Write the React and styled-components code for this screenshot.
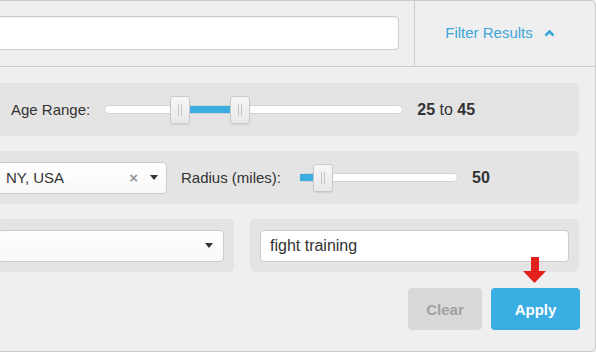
import React from "react";
import styled, { createGlobalStyle } from "styled-components";

const GlobalStyle = createGlobalStyle`
  body {
    margin: 0;
    background: #efefef;
    overflow: hidden;
    font-family: "Liberation Sans", Arial, sans-serif;
    color: #333;
  }
`;

const Panel = styled.div`
  box-sizing: border-box;
  width: 626px;
  height: 352px;
  margin-left: -30px;
  background: #efefef;
  border: 1px solid #ccc;
  border-radius: 0 6px 5px 0;
`;

const Header = styled.div`
  box-sizing: border-box;
  display: flex;
  height: 66px;
  border-bottom: 1px solid #ccc;
`;

const SearchWrap = styled.div`
  flex: 1;
  padding: 15px 15px 0 16px;
`;

const SearchInput = styled.div`
  box-sizing: border-box;
  height: 34px;
  background: #fff;
  border: 1px solid #ccc;
  border-radius: 4px;
  box-shadow: inset 0 1px 2px rgba(0, 0, 0, 0.06);
`;

const FilterToggle = styled.div`
  box-sizing: border-box;
  width: 181px;
  border-left: 1px solid #ccc;
  display: flex;
  align-items: center;
  justify-content: center;
  gap: 11px;
  padding: 0 10px 2px 0;
  color: #3ba6dc;
  font-size: 15px;
`;

const Content = styled.div`
  padding: 16px 16px 0;
`;

const Well = styled.div`
  box-sizing: border-box;
  display: flex;
  align-items: center;
  height: 53px;
  margin-bottom: ${(p) => (p.$last ? 0 : 15)}px;
  padding: 0 10px 0 ${(p) => p.$padLeft || 10}px;
  background: #e4e4e4;
  border-radius: 5px;
  flex: ${(p) => (p.$grow ? 1 : "none")};
  width: ${(p) => (p.$width ? `${p.$width}px` : "auto")};
`;

const SplitRow = styled.div`
  display: flex;
  gap: 16px;
  margin-top: 1px;
`;

const Label = styled.span`
  font-size: 15px;
  color: #333;
  margin-left: ${(p) => p.$before || 0}px;
  margin-right: ${(p) => p.$gap}px;
  white-space: nowrap;
`;

const Value = styled.span`
  font-size: 16px;
  margin-left: 14px;
  color: #333;

  b {
    font-weight: 700;
  }
`;

const Track = styled.div`
  position: relative;
  box-sizing: border-box;
  width: ${(p) => p.$width}px;
  height: 9px;
  background: #fff;
  border: 1px solid #d2d2d2;
  border-radius: 5px;
`;

const Fill = styled.div`
  position: absolute;
  top: 0;
  bottom: 0;
  background: #3aaee2;
`;

const Handle = styled.div`
  position: absolute;
  top: 50%;
  box-sizing: border-box;
  width: 20px;
  height: 28px;
  margin-top: -14px;
  background: linear-gradient(#f6f6f6, #e9e9e9);
  border: 1px solid #c9c9c9;
  border-radius: 3px;
  box-shadow: 0 1px 1px rgba(0, 0, 0, 0.08);

  &::before,
  &::after {
    content: "";
    position: absolute;
    top: 7px;
    width: 1px;
    height: 12px;
    background: #c4c4c4;
  }
  &::before {
    left: 7px;
  }
  &::after {
    left: 10px;
  }
`;

const Select = styled.div`
  box-sizing: border-box;
  display: flex;
  align-items: center;
  height: 32px;
  width: ${(p) => (p.$width ? `${p.$width}px` : "100%")};
  padding: 0 ${(p) => p.$padRight || 10}px 0 8px;
  background: linear-gradient(#fff, #f8f8f8);
  border: 1px solid #ccc;
  border-radius: 4px;
  font-size: 15px;
  color: #333;
`;

const SelectText = styled.span`
  flex: 1;
`;

const ClearX = styled.span`
  color: #999;
  font-size: 15px;
  font-weight: 700;
  margin-right: 12px;
`;

const Caret = styled.span`
  width: 0;
  height: 0;
  border-left: 4px solid transparent;
  border-right: 4px solid transparent;
  border-top: 5px solid #333;
`;

const TextInput = styled.div`
  box-sizing: border-box;
  display: flex;
  align-items: center;
  width: 100%;
  height: 32px;
  padding: 0 9px;
  background: #fff;
  border: 1px solid #ccc;
  border-radius: 4px;
  font-size: 16px;
  color: #333;
`;

const ButtonRow = styled.div`
  display: flex;
  justify-content: flex-end;
  gap: 9px;
  margin-top: 16px;
  margin-right: -1px;
`;

const Button = styled.button`
  position: relative;
  width: ${(p) => p.$width}px;
  height: 42px;
  border: none;
  border-radius: 4px;
  font-family: "Liberation Sans", Arial, sans-serif;
  font-size: 15px;
  font-weight: 700;
  background: ${(p) => (p.$primary ? "#3aaee2" : "#d9d9d9")};
  color: ${(p) => (p.$primary ? "#fff" : "#a2a2a2")};
`;

const Arrow = styled.svg`
  position: absolute;
  left: 32px;
  top: -31px;
`;

const RangeSlider = ({ width, min, max, values }) => {
  const usable = width - 20;
  const pos = values.map((v) => ((v - min) / (max - min)) * usable);
  const fillLeft = values.length > 1 ? pos[0] + 19 : 0;
  const fillRight = pos[pos.length - 1] + 1;
  return (
    <Track $width={width}>
      <Fill style={{ left: fillLeft, width: fillRight - fillLeft }} />
      {pos.map((p, i) => (
        <Handle key={i} style={{ left: p - 1 }} />
      ))}
    </Track>
  );
};

const App = () => {
  return (
    <>
      <GlobalStyle />
      <Panel>
        <Header>
          <SearchWrap>
            <SearchInput />
          </SearchWrap>
          <FilterToggle>
            Filter Results
            <svg width="11" height="8" viewBox="0 0 11 8">
              <polyline
                points="1.5,6.5 5.5,2.5 9.5,6.5"
                fill="none"
                stroke="#3ba6dc"
                strokeWidth="2.6"
              />
            </svg>
          </FilterToggle>
        </Header>
        <Content>
          <Well $padLeft={24}>
            <Label $gap={14}>Age Range:</Label>
            <RangeSlider width={299} min={3} max={96} values={[25, 45]} />
            <Value>
              <b>25</b> to <b>45</b>
            </Value>
          </Well>
          <Well>
            <Select $width={170} $padRight={8}>
              <SelectText>NY, USA</SelectText>
              <ClearX>×</ClearX>
              <Caret />
            </Select>
            <Label $before={14} $gap={18}>
              Radius (miles):
            </Label>
            <RangeSlider width={159} min={0} max={500} values={[50]} />
            <Value>
              <b>50</b>
            </Value>
          </Well>
          <SplitRow>
            <Well $grow $last $padLeft={11}>
              <Select $padRight={10}>
                <SelectText />
                <Caret />
              </Select>
            </Well>
            <Well $width={329} $last>
              <TextInput>fight training</TextInput>
            </Well>
          </SplitRow>
          <ButtonRow>
            <Button $width={74}>Clear</Button>
            <Button $width={89} $primary>
              Apply
              <Arrow width="23" height="26" viewBox="0 0 23 26">
                <path d="M8 0h8v14h7L11.5 26 0 14h8z" fill="#e2211c" />
              </Arrow>
            </Button>
          </ButtonRow>
        </Content>
      </Panel>
    </>
  );
};

export default App;
